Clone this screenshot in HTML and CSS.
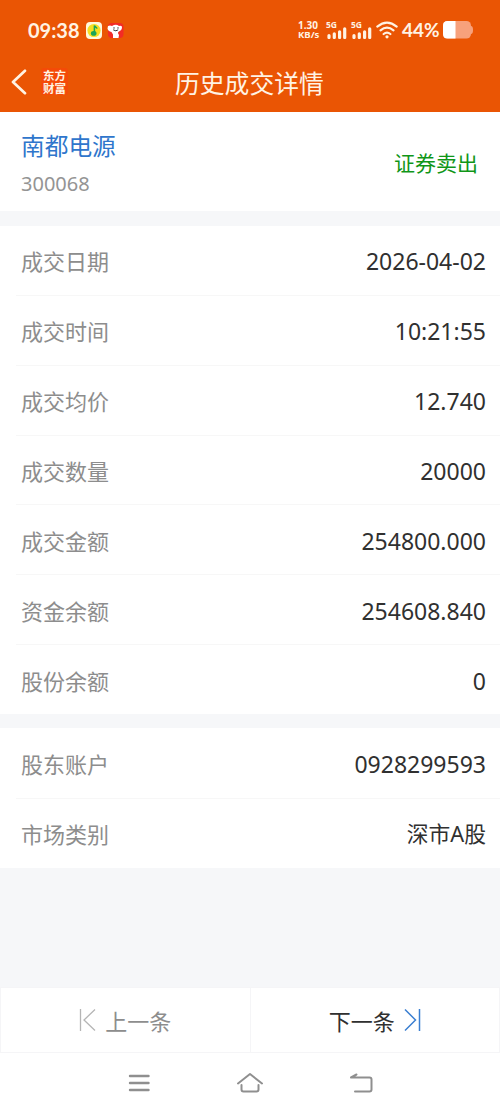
FILE: index.html
```html
<!DOCTYPE html>
<html lang="zh-CN">
<head>
  <meta charset="UTF-8" />
  <meta name="viewport" content="width=device-width, initial-scale=1.0"/>
  <title>历史成交详情</title>
  <link rel="stylesheet" href="styles.css">
</head>
<body>
  <div class="app-container">
    <div class="status-bar">
      <span class="clock">09:38</span>
      <svg class="app-icon" width="16" height="17" viewBox="0 0 16 17">
        <rect width="16" height="17" rx="4" fill="#fff8dc"/>
        <circle cx="8" cy="8.5" r="6.6" fill="#f5df22"/>
        <path d="M8.4 10V3.4c.3 1.5 2.3 1.8 2.6 3.2" fill="none" stroke="#18a558" stroke-width="1.5"/>
        <ellipse cx="7.7" cy="11.4" rx="2.8" ry="2.3" fill="#18a558"/>
      </svg>
      <svg class="app-icon" width="17" height="17" viewBox="0 0 17 17">
        <rect x="1" y="1" width="15.5" height="15" rx="4" fill="#f32b25"/>
        <path d="M1 4Q3 3 5 4Q9 1.5 12 4Q15.5 3.2 15 6Q14.5 9 12 9.5Q10 10.5 12 13L11.5 16H6V12.5L4.5 10Q1 9 .5 6.5Z" fill="#fff"/>
        <path d="M7 5.2v1.5M11 5.2v1.5M6.2 7.8q2.7 2 5 0" fill="none" stroke="#333" stroke-width="1"/>
      </svg>
      <div class="status-right">
        <div class="net-speed"><span>1.30</span><span>KB/s</span></div>
        <div class="signal">
          <span>5G</span>
          <svg width="21" height="12" viewBox="0 0 21 12"><path d="M3 8.5v2M8.3 6.8v3.7M13.6 4.8v5.7M18.7 1.8v8.7" stroke="#fff3e4" stroke-width="3.2" stroke-linecap="round"/></svg>
        </div>
        <div class="signal">
          <span>5G</span>
          <svg width="21" height="12" viewBox="0 0 21 12"><path d="M3 8.5v2M8.3 6.8v3.7M13.6 4.8v5.7M18.7 1.8v8.7" stroke="#fff3e4" stroke-width="3.2" stroke-linecap="round"/></svg>
        </div>
        <svg class="wifi" width="22" height="18" viewBox="0 0 22 18">
          <path d="M1.3 5.6Q11-2.4 20.7 5.6M4.5 9.4Q11 4 17.5 9.4" fill="none" stroke="#fff3e4" stroke-width="2.2" stroke-linecap="round"/>
          <path d="M7.6 13Q11 10.2 14.4 13" fill="none" stroke="#fff3e4" stroke-width="2.2" stroke-linecap="round"/>
          <circle cx="11" cy="15.8" r="1.6" fill="#fff3e4"/>
        </svg>
        <span class="percent">44%</span>
        <svg class="battery" width="30" height="18" viewBox="0 0 30 18">
          <rect width="28" height="17.5" rx="4.5" fill="#f7a17c"/>
          <path d="M28 5q2 0 2 4t-2 4z" fill="#f7a17c"/>
          <path d="M12.5 0H4.5Q0 0 0 4.5V13q0 4.5 4.5 4.5h8z" fill="#fff"/>
        </svg>
      </div>
    </div>

    <div class="header">
      <svg class="back-button" width="17" height="26" viewBox="0 0 17 26"><path d="M14 1.8L2 13l12 11.2" fill="none" stroke="#fff3e4" stroke-width="2.7" stroke-linecap="round" stroke-linejoin="round"/></svg>
      <div class="logo"><span>东方</span><span>财富</span></div>
      <h1>历史成交详情</h1>
    </div>

    <div class="stock">
      <div>
        <div class="stock-name">南都电源</div>
        <div class="stock-code">300068</div>
      </div>
      <div class="trade-type">证券卖出</div>
    </div>

    <div class="section">
      <div class="row"><span class="label">成交日期</span><span class="value date">2026-04-02</span></div>
      <div class="row"><span class="label">成交时间</span><span class="value time">10:21:55</span></div>
      <div class="row"><span class="label">成交均价</span><span class="value price">12.740</span></div>
      <div class="row"><span class="label">成交数量</span><span class="value">20000</span></div>
      <div class="row"><span class="label">成交金额</span><span class="value">254800.000</span></div>
      <div class="row"><span class="label">资金余额</span><span class="value">254608.840</span></div>
      <div class="row"><span class="label">股份余额</span><span class="value">0</span></div>
    </div>

    <div class="section account">
      <div class="row"><span class="label">股东账户</span><span class="value">0928299593</span></div>
      <div class="row"><span class="label">市场类别</span><span class="value market">深市A股</span></div>
    </div>

    <div class="pager">
      <div class="prev">
        <svg width="18" height="24" viewBox="0 0 18 24"><path d="M1.5 1v22M16 1.5L5 12l11 10.5" fill="none" stroke="#b5b5b5" stroke-width="1.3"/></svg>
        <span>上一条</span>
      </div>
      <div class="next">
        <span>下一条</span>
        <svg width="18" height="24" viewBox="0 0 18 24"><path d="M16.5 1v22M2 1.5L12.5 12L2 22.5" fill="none" stroke="#3b7fd1" stroke-width="1.5"/></svg>
      </div>
    </div>

    <div class="navbar">
      <svg width="28" height="24" viewBox="0 0 28 24"><path d="M5 5h18.5M5 12h18.5M5 19h18.5" stroke="#8f8f8f" stroke-width="2.4" stroke-linecap="round"/></svg>
      <svg width="28" height="24" viewBox="0 0 28 24"><path d="M2 12.5L14 3l12 9.5M5.5 14v4.5q0 2 2 2h13q2 0 2-2V14" fill="none" stroke="#8f8f8f" stroke-width="2" stroke-linecap="round" stroke-linejoin="round"/></svg>
      <svg width="28" height="24" viewBox="0 0 28 24"><path d="M9.5 3.5L4 6.5h18.5q2 0 2 2v10q0 2-2 2H8" fill="none" stroke="#8f8f8f" stroke-width="2" stroke-linecap="round" stroke-linejoin="round"/></svg>
    </div>
  </div>
</body>
</html>
```
FILE: styles.css
```css
body {
  margin: 0;
  font-family: "Noto Sans", "Noto Sans CJK SC", sans-serif;
  background-color: #f6f7f9;
}
.app-container {
  width: 500px;
  height: 1111px;
  display: flex;
  flex-direction: column;
  overflow: hidden;
}
.status-bar {
  height: 60px;
  box-sizing: border-box;
  padding: 0 27px 0 28px;
  display: flex;
  align-items: center;
  background-color: #ea5504;
  color: #fff3e4;
}
.clock {
  width: 58px;
  font-family: Lato, sans-serif;
  font-size: 20px;
  font-weight: bold;
  line-height: 20px;
}
.app-icon {
  margin-right: 5px;
}
.status-right {
  margin-left: auto;
  display: flex;
  align-items: center;
}
.net-speed {
  display: flex;
  flex-direction: column;
  width: 28px;
  font-size: 9.5px;
  font-weight: bold;
  line-height: 10px;
}
.net-speed span:first-child {
  font-size: 10px;
}
.signal {
  width: 25px;
  height: 19px;
  position: relative;
}
.signal span {
  position: absolute;
  top: -1px;
  left: 0;
  font-size: 8.5px;
  font-weight: bold;
  line-height: 9px;
}
.signal svg {
  display: block;
  margin-top: 6px;
}
.wifi {
  margin-right: 4px;
}
.percent {
  width: 41px;
  font-family: Lato, sans-serif;
  font-size: 19px;
  font-weight: bold;
  line-height: 20px;
}
.header {
  height: 52px;
  box-sizing: border-box;
  padding-left: 11px;
  padding-bottom: 9px;
  display: grid;
  grid-template-columns: 30px 134px 1fr;
  align-items: center;
  background-color: #ea5504;
  color: #fff3e4;
}
.logo {
  width: 27px;
  height: 27px;
  display: flex;
  flex-direction: column;
  align-items: center;
  justify-content: center;
  border-radius: 3px;
  background-color: #f44a08;
  font-size: 11.5px;
  font-weight: bold;
  line-height: 13px;
}
h1 {
  margin: 0;
  padding-top: 3px;
  font-size: 24.8px;
  font-weight: normal;
  line-height: 30px;
  white-space: nowrap;
}
.stock {
  height: 99px;
  box-sizing: border-box;
  padding: 18px 22px 0 21px;
  display: flex;
  justify-content: space-between;
  background-color: #fff;
}
.stock-name {
  color: #2f76cc;
  font-size: 23.7px;
  line-height: 32px;
}
.stock-code {
  margin-top: 6px;
  color: #949494;
  font-size: 20px;
  line-height: 32px;
}
.trade-type {
  padding-top: 17px;
  color: #109618;
  font-size: 21px;
  line-height: 32px;
}
.section {
  margin-top: 15px;
  height: 488px;
  display: flex;
  flex-direction: column;
  background-color: #fff;
}
.section.account {
  margin-top: 14px;
  height: 140px;
}
.row {
  flex: 1;
  margin-left: 16px;
  padding: 0 14px 0 5px;
  display: flex;
  align-items: center;
  justify-content: space-between;
  border-bottom: 1px solid #f7f7f7;
}
.row:last-child {
  border-bottom: none;
}
.label {
  padding-top: 2px;
  color: #8d8d8d;
  font-size: 22px;
  line-height: 30px;
}
.value {
  padding-top: 2px;
  color: #303030;
  font-size: 23px;
  line-height: 30px;
}
.market {
  font-size: 21.8px;
}
.pager {
  margin-top: auto;
  height: 66px;
  display: flex;
  border: 1px solid #f5f5f7;
  box-sizing: border-box;
  background-color: #fff;
  font-size: 22px;
}
.prev,
.next {
  flex: 1;
  display: flex;
  align-items: center;
  justify-content: center;
  gap: 8px;
}
.prev {
  border-right: 1px solid #f5f5f7;
  color: #8d8d8d;
}
.next {
  color: #303030;
}
.navbar {
  height: 58px;
  box-sizing: border-box;
  padding-top: 18px;
  display: flex;
  justify-content: center;
  gap: 83px;
  background-color: #fff;
}
```
